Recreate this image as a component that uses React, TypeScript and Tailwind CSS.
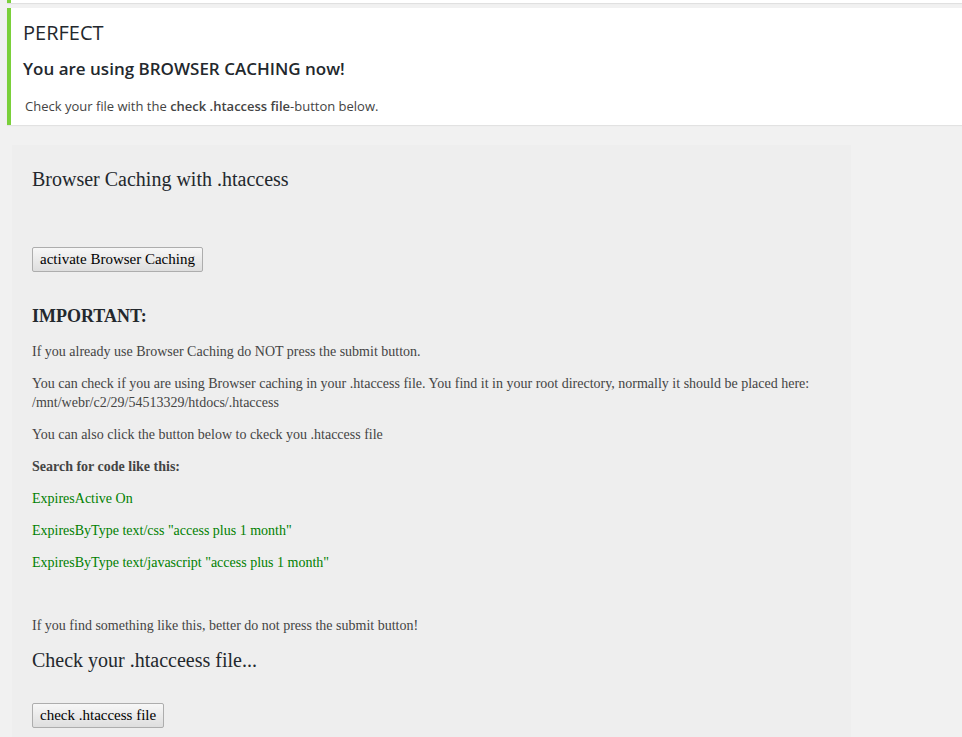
import React from "react";

const serif = "font-['Liberation_Serif',_'Times_New_Roman',_serif]";

const WinButton = ({ label }: { label: string }) => (
  <button
    className={`h-[25px] px-[7px] border border-[#adadad] rounded-[2px] bg-gradient-to-b from-[#f7f7f7] to-[#dedede] text-[15px] leading-none text-black ${serif}`}
  >
    {label}
  </button>
);

export default function App() {
  return (
    <div className="min-h-screen bg-[#f1f1f1] pl-[7px] overflow-hidden">
      {/* previous notice, cut off */}
      <div className="h-[3px] bg-white border-l-4 border-[#7ad03a] shadow-[0_1px_1px_rgba(0,0,0,0.08)]" />

      {/* success notice */}
      <div className="mt-[5px] h-[117px] bg-white border-l-4 border-[#7ad03a] shadow-[0_1px_1px_rgba(0,0,0,0.06)] pl-[12px] pt-[11px] font-['Open_Sans',_sans-serif] text-[#23282d]">
        <h2 className="text-[20px] leading-[28px] font-normal">PERFECT</h2>
        <h3 className="mt-[11px] text-[17px] leading-[22px] font-semibold">
          You are using BROWSER CACHING now!
        </h3>
        <p className="mt-[16px] ml-[2px] text-[13px] leading-[20px] text-[#444]">
          Check your file with the <strong className="font-semibold">check .htaccess file</strong>-button below.
        </p>
      </div>

      {/* settings panel */}
      <div className={`mt-[20px] ml-[5px] w-[839px] min-h-[620px] bg-[#eeeeee] px-[20px] pt-[22px] ${serif} text-[#444]`}>
        <h2 className="text-[20px] leading-[24px] text-[#23282d] font-normal">
          Browser Caching with .htaccess
        </h2>

        <div className="mt-[56px]">
          <WinButton label="activate Browser Caching" />
        </div>

        <h3 className="mt-[33px] text-[18px] leading-[22px] font-bold text-[#23282d]">IMPORTANT:</h3>

        <div className="mt-[15px] flex flex-col gap-[13px] text-[14px] leading-[19px]">
          <p>If you already use Browser Caching do NOT press the submit button.</p>
          <p>
            You can check if you are using Browser caching in your .htaccess file. You find it in your root directory, normally it should be placed here:
            <br />
            /mnt/webr/c2/29/54513329/htdocs/.htaccess
          </p>
          <p>You can also click the button below to ckeck you .htaccess file</p>
          <p className="font-bold">Search for code like this:</p>
          <p className="text-[#008000]">ExpiresActive On</p>
          <p className="text-[#008000]">ExpiresByType text/css "access plus 1 month"</p>
          <p className="text-[#008000]">ExpiresByType text/javascript "access plus 1 month"</p>
        </div>

        <p className="mt-[44px] text-[14px] leading-[19px]">
          If you find something like this, better do not press the submit button!
        </p>

        <h2 className="mt-[13px] text-[20px] leading-[24px] text-[#23282d] font-normal">
          Check your .htacceess file...
        </h2>

        <div className="mt-[31px] pb-[20px]">
          <WinButton label="check .htaccess file" />
        </div>
      </div>
    </div>
  );
}
